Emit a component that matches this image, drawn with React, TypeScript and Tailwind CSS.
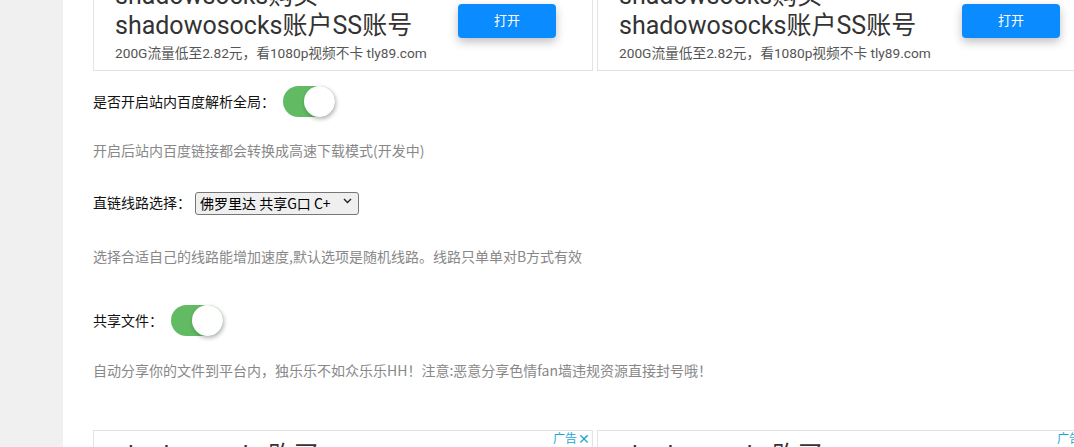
import React, { useState } from 'react';

const adFont = { fontFamily: 'Roboto, "Noto Sans CJK SC", sans-serif' };

const AdBox: React.FC<{ bottom?: boolean }> = ({ bottom }) => {
  if (bottom) {
    return (
      <div className="relative w-[500px] h-[120px] shrink-0 border border-[#e3e3e3] bg-white px-[21px] pt-[3px]" style={adFont}>
        <div className="absolute right-[2px] top-[1px] flex items-center gap-[1px] text-[12px] leading-[14px] text-[#1ba8d6]">
          <span>广告</span>
          <span className="text-[14px]">✕</span>
        </div>
        <div className="text-[25px] leading-[30px] text-[#333] pt-[7px]">shadowsocks购买</div>
      </div>
    );
  }
  return (
    <div className="w-[500px] h-[102px] -mt-[31px] shrink-0 border border-[#e3e3e3] bg-white flex justify-between pl-[21px] pr-[36px]" style={adFont}>
      <div className="pt-[11px]">
        <div className="text-[25px] leading-[30px] text-[#333]">
          shadowsocks购买
          <br />
          shadowosocks账户SS账号
        </div>
        <div className="mt-[3px] text-[13.7px] leading-[18px] text-[#555]">
          200G流量低至2.82元，看1080p视频不卡 tly89.com
        </div>
      </div>
      <div className="pt-[34px]">
        <button className="w-[98px] h-[34px] rounded-[4px] bg-[#0a8bff] text-white text-[13px] shadow-[0_4px_10px_rgba(0,0,0,0.25)]">
          打开
        </button>
      </div>
    </div>
  );
};

const Toggle: React.FC<{ on: boolean; onChange: () => void }> = ({ on, onChange }) => (
  <button
    onClick={onChange}
    className={`relative w-[52px] h-[31px] rounded-full transition ${on ? 'bg-[#62bb62]' : 'bg-[#ddd]'}`}
  >
    <span
      className={`absolute top-0 w-[31px] h-[31px] rounded-full bg-white shadow-[1px_2px_4px_rgba(0,0,0,0.3)] transition-all ${on ? 'left-[21px]' : 'left-0'}`}
    />
  </button>
);

export default function App() {
  const [baidu, setBaidu] = useState(true);
  const [share, setShare] = useState(true);

  return (
    <div className="flex h-[447px] overflow-hidden bg-white" style={{ fontFamily: '"Noto Sans CJK SC", "Liberation Sans", sans-serif' }}>
      <div className="w-[63px] shrink-0 bg-[#f0f0f0]" />
      <div className="flex-1 min-w-0 overflow-hidden pl-[30px]">
        <div className="flex gap-[4px]">
          <AdBox />
          <AdBox />
        </div>

        <div className="mt-[15px] flex items-center gap-[8px] h-[31px]">
          <span className="text-[14px] text-[#111]">是否开启站内百度解析全局：</span>
          <Toggle on={baidu} onChange={() => setBaidu(!baidu)} />
        </div>
        <p className="mt-[23px] text-[14px] leading-[20px] text-[#888]">开启后站内百度链接都会转换成高速下载模式(开发中)</p>

        <div className="mt-[31px] flex items-center gap-[4px] h-[23px]">
          <span className="text-[14px] text-[#111]">直链线路选择：</span>
          <div className="relative">
            <select className="appearance-none w-[164px] h-[23px] rounded-[3px] border border-[#767676] bg-[#efefef] pl-[4px] text-[14px] leading-[21px] text-black outline-none">
              <option>佛罗里达 共享G口 C+</option>
              <option>随机线路</option>
            </select>
            <svg className="pointer-events-none absolute right-[7px] top-[8px]" width="9" height="6" viewBox="0 0 9 6">
              <path d="M1 1l3.5 3.5L8 1" fill="none" stroke="#222" strokeWidth="1.4" />
            </svg>
          </div>
        </div>
        <p className="mt-[32px] text-[14px] leading-[20px] text-[#888]">选择合适自己的线路能增加速度,默认选项是随机线路。线路只单单对B方式有效</p>

        <div className="mt-[39px] flex items-center gap-[8px] h-[31px]">
          <span className="text-[14px] text-[#111]">共享文件：</span>
          <Toggle on={share} onChange={() => setShare(!share)} />
        </div>
        <p className="mt-[24px] text-[14px] leading-[20px] text-[#888]">自动分享你的文件到平台内，独乐乐不如众乐乐HH！注意:恶意分享色情fan墙违规资源直接封号哦！</p>

        <div className="mt-[50px] flex gap-[4px]">
          <AdBox bottom />
          <AdBox bottom />
        </div>
      </div>
    </div>
  );
}
